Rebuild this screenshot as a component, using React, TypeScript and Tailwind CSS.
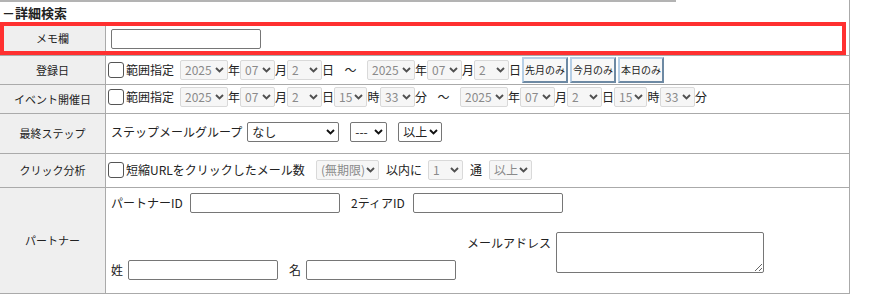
import React from 'react';

interface SelProps {
    value: string;
    width: string;
    disabled?: boolean;
}

const Chevron: React.FC<{ color: string }> = ({ color }) => (
    <svg width="9" height="6" viewBox="0 0 9 6" className="shrink-0">
        <path d="M1 1 L4.5 4.5 L8 1" fill="none" stroke={color} strokeWidth="1.9" />
    </svg>
);

// fake select box (native one looks different on linux)
const Sel: React.FC<SelProps> = ({ value, width, disabled }) => (
    <div
        className={`flex h-[20px] shrink-0 items-center justify-between overflow-hidden rounded-[2px] border pl-[4px] pr-[3px] text-[12px] leading-none ${width} ${
            disabled ? 'border-[#d9d9d9] bg-[#f6f6f6] text-[#8a8a8a]' : 'border-[#767676] bg-white text-[#222]'
        }`}
    >
        <span className="whitespace-nowrap">{value}</span>
        <Chevron color={disabled ? '#505050' : '#111'} />
    </div>
);

const Check: React.FC = () => (
    <span className="ml-[-3px] block h-[16px] w-[16px] shrink-0 rounded-[3px] border border-[#555] bg-white" />
);

const Btn: React.FC<{ children: React.ReactNode }> = ({ children }) => (
    <button
        type="button"
        className="h-[26px] w-[46px] shrink-0 border-2 border-t-[#b7cfe6] border-l-[#b7cfe6] border-r-[#6d89a3] border-b-[#6d89a3] bg-[#f8f8f8] p-0 text-[10px] leading-none text-[#222]"
    >
        {children}
    </button>
);

const TextBox: React.FC<{ className?: string }> = ({ className = '' }) => (
    <input type="text" className={`h-[20px] w-[150px] shrink-0 rounded-[2px] border border-[#767676] bg-white ${className}`} />
);

const Row: React.FC<{ label: string; height: string; body?: string; children: React.ReactNode }> = ({ label, height, body = '', children }) => (
    <div className={`relative flex border-b border-[#aaaaaa] ${height}`}>
        <div className="flex w-[106px] shrink-0 items-center justify-center border-r border-[#aaaaaa] bg-[#efefef] text-[11px]">{label}</div>
        <div className={`flex min-w-0 flex-1 pl-[5px] ${body}`}>{children}</div>
    </div>
);

const Unit: React.FC<{ children: React.ReactNode; w?: string }> = ({ children, w = 'w-[12px]' }) => (
    <span className={`shrink-0 text-center ${w}`}>{children}</span>
);

const App: React.FC = () => {
    return (
        <div className="h-[294px] w-[876px] overflow-hidden bg-white font-['Noto_Sans_CJK_JP',sans-serif] text-[12px] text-[#222]">
            <div className="w-[850px] border-r border-[#aaaaaa]">
                <div className="h-[2px] w-[676px] bg-[#b3b3b3]" />
                <div className="flex h-[20px] items-center pl-[2px] text-[13px] font-bold leading-none">－詳細検索</div>

                {/* メモ欄 */}
                <Row label="メモ欄" height="h-[34px]" body="items-center">
                    <TextBox />
                    <div className="pointer-events-none absolute left-0 top-0 h-[33px] w-[846px] border-4 border-[#ff3030]" />
                </Row>

                {/* 登録日 */}
                <Row label="登録日" height="h-[29px]" body="items-center">
                    <Check />
                    <span className="ml-[2px] shrink-0">範囲指定</span>
                    <div className="ml-[6px] flex items-center">
                        <Sel value="2025" width="w-[48px]" disabled />
                        <Unit>年</Unit>
                        <Sel value="07" width="w-[35px]" disabled />
                        <Unit>月</Unit>
                        <Sel value="2" width="w-[35px]" disabled />
                        <Unit>日</Unit>
                        <Unit w="w-[33px]">～</Unit>
                        <Sel value="2025" width="w-[48px]" disabled />
                        <Unit>年</Unit>
                        <Sel value="07" width="w-[35px]" disabled />
                        <Unit>月</Unit>
                        <Sel value="2" width="w-[35px]" disabled />
                        <Unit>日</Unit>
                    </div>
                    <div className="ml-[1px] flex gap-[2px]">
                        <Btn>先月のみ</Btn>
                        <Btn>今月のみ</Btn>
                        <Btn>本日のみ</Btn>
                    </div>
                </Row>

                {/* イベント開催日 */}
                <Row label="イベント開催日" height="h-[29px]" body="items-center pb-[4px]">
                    <Check />
                    <span className="ml-[2px] shrink-0">範囲指定</span>
                    <div className="ml-[6px] flex items-center">
                        <Sel value="2025" width="w-[48px]" disabled />
                        <Unit>年</Unit>
                        <Sel value="07" width="w-[35px]" disabled />
                        <Unit>月</Unit>
                        <Sel value="2" width="w-[35px]" disabled />
                        <Unit>日</Unit>
                        <Sel value="15" width="w-[33px]" disabled />
                        <Unit w="w-[13px]">時</Unit>
                        <Sel value="33" width="w-[35px]" disabled />
                        <Unit>分</Unit>
                        <Unit w="w-[33px]">～</Unit>
                        <Sel value="2025" width="w-[48px]" disabled />
                        <Unit>年</Unit>
                        <Sel value="07" width="w-[35px]" disabled />
                        <Unit>月</Unit>
                        <Sel value="2" width="w-[35px]" disabled />
                        <Unit>日</Unit>
                        <Sel value="15" width="w-[33px]" disabled />
                        <Unit w="w-[13px]">時</Unit>
                        <Sel value="33" width="w-[35px]" disabled />
                        <Unit>分</Unit>
                    </div>
                </Row>

                {/* 最終ステップ */}
                <Row label="最終ステップ" height="h-[40px]" body="items-center pb-[4px]">
                    <span className="shrink-0">ステップメールグループ</span>
                    <div className="ml-[5px] flex items-center gap-[11px]">
                        <Sel value="なし" width="w-[92px]" />
                        <Sel value="---" width="w-[37px]" />
                        <Sel value="以上" width="w-[44px]" />
                    </div>
                </Row>

                {/* クリック分析 */}
                <Row label="クリック分析" height="h-[34px]" body="items-center pb-[2px]">
                    <Check />
                    <span className="ml-[2px] w-[179px] shrink-0">短縮URLをクリックしたメール数</span>
                    <div className="ml-[11px] flex items-center">
                        <Sel value="(無期限)" width="w-[63px]" disabled />
                        <span className="ml-[7px] mr-[6px]">以内に</span>
                        <Sel value="1" width="w-[35px]" disabled />
                        <span className="mx-[7px]">通</span>
                        <Sel value="以上" width="w-[43px]" disabled />
                    </div>
                </Row>

                {/* パートナー */}
                <Row label="パートナー" height="h-[106px]" body="flex-col pt-[5px]">
                    <div className="flex h-[20px] items-center">
                        <span className="w-[75px] shrink-0">パートナーID</span>
                        <TextBox className="ml-[4px]" />
                        <span className="ml-[11px] w-[58px] shrink-0">2ティアID</span>
                        <TextBox className="ml-[4px]" />
                    </div>
                    <div className="mt-[19px] flex items-start pl-[356px]">
                        <span className="pt-[2px] leading-[18px]">メールアドレス</span>
                        <textarea className="ml-[5px] h-[41px] w-[208px] resize rounded-[2px] border border-[#767676] bg-white" />
                    </div>
                    <div className="mt-[-13px] flex h-[20px] items-center">
                        <span className="shrink-0">姓</span>
                        <TextBox className="ml-[5px]" />
                        <span className="ml-[11px] shrink-0">名</span>
                        <TextBox className="ml-[5px]" />
                    </div>
                </Row>
            </div>
        </div>
    );
};

export default App;
